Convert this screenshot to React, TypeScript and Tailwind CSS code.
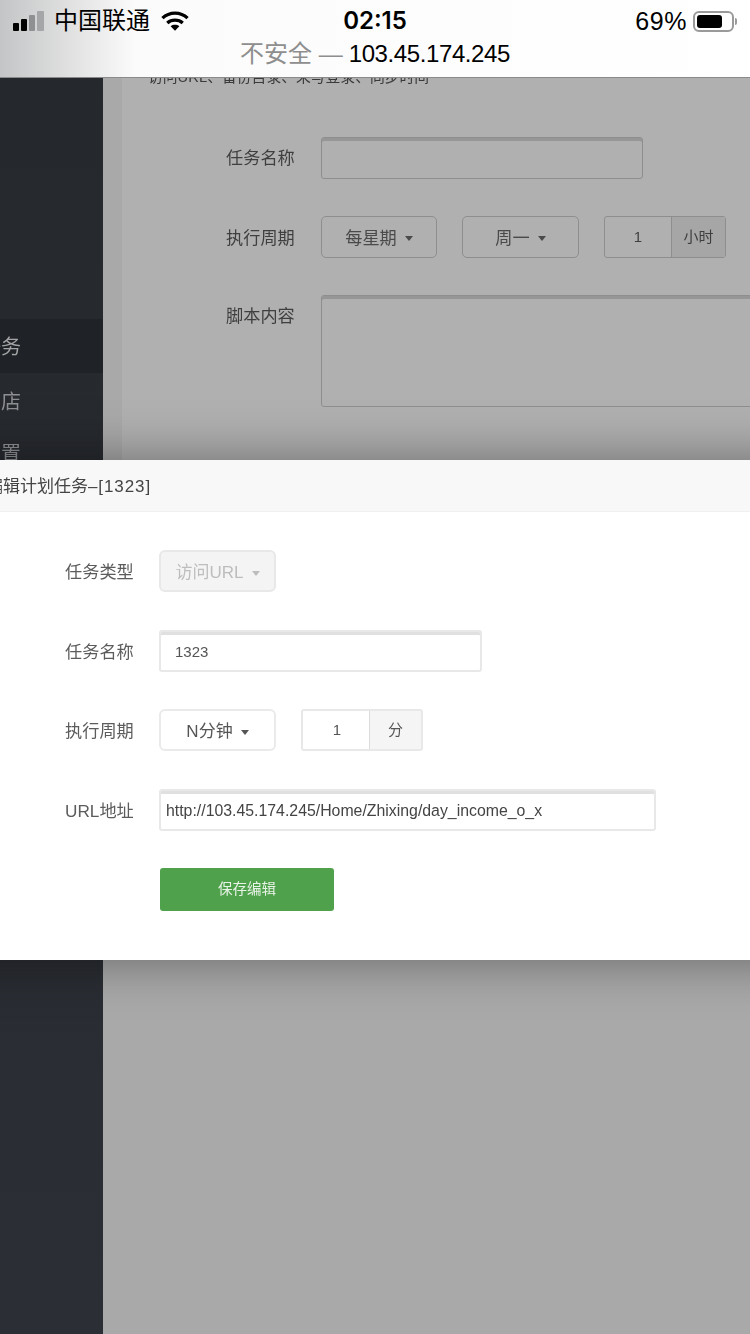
const cjk = { fontFamily: '"Liberation Sans", "Noto Sans CJK SC", sans-serif' };

function Caret({ className }: { className: string }) {
  return <span className={'ml-2 inline-block h-0 w-0 border-x-[4px] border-t-[5px] border-x-transparent ' + className} />;
}

function StatusBar() {
  return (
    <div className="relative z-10 h-[78px] shrink-0 border-b border-[#8a8a8a] bg-gradient-to-r from-[#c4c5c6] via-[#fbfbfb] via-[18%] to-white text-black">
      <div className="flex h-[42px] items-center justify-between px-[13px]">
        <div className="flex w-[200px] items-center">
          <div className="flex items-end gap-[2px]">
            <span className="h-[8px] w-[6px] rounded-[1px] bg-black" />
            <span className="h-[12px] w-[6px] rounded-[1px] bg-black" />
            <span className="h-[16px] w-[6px] rounded-[1px] bg-[#8f9091]" />
            <span className="h-[20px] w-[7px] rounded-[1px] bg-[#a5a6a7]" />
          </div>
          <span className="ml-[10px] text-[24px] leading-none">中国联通</span>
          <svg className="ml-[11px]" width="28" height="22" viewBox="0 0 29 22" fill="none" stroke="black" strokeWidth="3.4">
            <path d="M1.5 8C8.8 1 20.2 1 27.5 8" />
            <path d="M6.5 13c4.4-4 11.6-4 16 0" />
            <path d="M14.5 21 10 16.4c2.6-2 6.4-2 9 0z" fill="black" stroke="none" />
          </svg>
        </div>
        <span className="text-[24px] font-semibold leading-none" style={{ fontFamily: 'Inter, sans-serif' }}>02:15</span>
        <div className="flex w-[200px] items-center justify-end">
          <span className="text-[25px] leading-none tracking-[0.6px]">69%</span>
          <span className="ml-[6px] flex h-[21px] w-[41px] items-center rounded-[6px] border-2 border-[#9a9a9a] p-[2px]">
            <span className="h-full w-[25px] rounded-[3px] bg-black" />
          </span>
          <span className="ml-[1px] h-[7px] w-[2px] rounded-r-sm bg-[#9a9a9a]" />
        </div>
      </div>
      <div className="mt-[2px] flex h-[20px] items-center justify-center text-[24px] leading-none">
        <span className="text-[#8e8e8e]">不安全 —</span>
        <span className="ml-[6px] tracking-[-0.4px]">103.45.174.245</span>
      </div>
    </div>
  );
}

function Sidebar() {
  return (
    <aside className="w-[103px] shrink-0 bg-gradient-to-b from-[#25282c] to-[#2b2e35] pt-[241px] text-[20px] text-[#8d8f92]">
      <div className="flex h-[54px] items-center bg-[#1f2226] text-[#a3a4a6]">
        <span className="-ml-[19px] pt-[2px]">任务</span>
      </div>
      <div className="flex h-[58px] items-center">
        <span className="-ml-[19px]">商店</span>
      </div>
      <div className="flex h-[46px] items-center">
        <span className="-ml-[19px]">设置</span>
      </div>
    </aside>
  );
}

function BackForm() {
  return (
    <div className="flex h-[382px] flex-col overflow-hidden bg-[#b0b0b0] pl-[104px] text-[17.2px] text-[#3f3f3f]">
      <p className="-mt-[8px] -ml-[78px] h-[67px] text-[14.8px] leading-[15px] text-[#3a3a3a]">访问URL、备份目录、未写登录、同步时间</p>
      <div className="flex h-[41px] items-center">
        <span className="w-[95px] pt-[2px]">任务名称</span>
        <div className="h-[42px] w-[322px] rounded-[3px] border border-[#8e8e8e] shadow-[inset_0_3px_0_#969696]" />
      </div>
      <div className="mt-[38px] flex h-[42px] items-center">
        <span className="w-[95px] pt-[3px]">执行周期</span>
        <div className="flex h-[42px] w-[116px] items-center justify-center rounded-[5px] border border-[#8e8e8e] pt-[3px] text-[#4a4a4a]">
          每星期<Caret className="border-t-[#4a4a4a]" />
        </div>
        <div className="ml-[25px] flex h-[42px] w-[117px] items-center justify-center rounded-[5px] border border-[#8e8e8e] pt-[3px] text-[#4a4a4a]">
          周一<Caret className="border-t-[#4a4a4a]" />
        </div>
        <div className="ml-[25px] flex h-[42px] w-[122px] rounded-[3px] border border-[#8e8e8e] text-[15px]">
          <span className="flex w-[66px] items-center justify-center">1</span>
          <span className="flex flex-1 items-center justify-center border-l border-[#8e8e8e] bg-[#a6a6a6]">小时</span>
        </div>
      </div>
      <div className="mt-[37px] flex">
        <span className="w-[95px] pt-[9px]">脚本内容</span>
        <div className="h-[112px] w-[440px] shrink-0 rounded-[3px] border border-[#8e8e8e] shadow-[inset_0_3px_0_#969696]" />
      </div>
    </div>
  );
}

function Row({ label, children }: { label: string; children: React.ReactNode }) {
  return (
    <div className="flex h-[42px] items-center">
      <span className="w-[94px] shrink-0 pt-[4px] text-[17.2px] text-[#5c5c5c]">{label}</span>
      {children}
    </div>
  );
}

function EditModal() {
  // sticks out past both window edges so the shadow doesn't fade at the sides
  return (
    <div className="absolute -inset-x-[80px] top-[460px] z-20 h-[500px] bg-white shadow-[0_0_50px_rgba(0,0,0,0.4)]">
      <div className="flex h-[52px] items-center overflow-hidden border-b border-[#f0f0f0] bg-[#f8f8f8] pl-[80px] pt-[3px] text-[17px] text-[#444]">
        <span className="-ml-[14px] whitespace-nowrap">编辑计划任务<span className="tracking-[0.9px]">–[1323]</span></span>
      </div>
      <div className="flex flex-col gap-[37.5px] pl-[145px] pt-[38px]">
        <Row label="任务类型">
          <div className="flex h-[42px] w-[117px] items-center justify-center rounded-[6px] border-2 border-[#e8e8e8] bg-[#f4f4f4] pt-[4px] text-[17px] text-[#bdbdbd]">
            访问URL<Caret className="border-t-[#bdbdbd]" />
          </div>
        </Row>
        <Row label="任务名称">
          <div className="flex h-[42px] w-[323px] items-center rounded-[3px] border-2 border-[#e8e8e8] pl-[14px] pt-[3px] text-[15px] text-[#555] shadow-[inset_0_3px_0_#e0e0e0]">1323</div>
        </Row>
        <Row label="执行周期">
          <div className="flex h-[42px] w-[117px] items-center justify-center rounded-[6px] border-2 border-[#eaeaea] pt-[4px] text-[17px] text-[#555]">
            N分钟<Caret className="border-t-[#555]" />
          </div>
          <div className="ml-[25px] flex h-[42px] w-[122px] rounded-[3px] border-2 border-[#e8e8e8] text-[15px] text-[#555]">
            <span className="flex w-[66px] items-center justify-center pl-[2px]">1</span>
            <span className="flex flex-1 items-center justify-center border-l border-[#dcdcdc] bg-[#f5f5f5]">分</span>
          </div>
        </Row>
        <Row label="URL地址">
          <div className="flex h-[42px] w-[497px] items-center rounded-[3px] border-2 border-[#e8e8e8] pl-[5px] pt-[3px] text-[15.85px] text-[#444] shadow-[inset_0_3px_0_#e0e0e0]">
            http://103.45.174.245/Home/Zhixing/day_income_o_x
          </div>
        </Row>
        <div className="-mt-[0.5px] ml-[95px] flex h-[43px] w-[174px] items-center justify-center rounded-[3px] bg-[#50a14c] pt-[2px] text-[14.5px] text-[#e8f3e7]">保存编辑</div>
      </div>
    </div>
  );
}

export default function App() {
  return (
    <div className="relative h-[1334px] w-[750px] overflow-hidden">
      <div className="flex h-full flex-col bg-[#a9a9a9] blur-[0.4px]" style={cjk}>
        <StatusBar />
        <div className="flex flex-1">
          <Sidebar />
          <main className="flex-1 pl-[19px]">
            <BackForm />
          </main>
        </div>
        <EditModal />
      </div>
    </div>
  );
}
